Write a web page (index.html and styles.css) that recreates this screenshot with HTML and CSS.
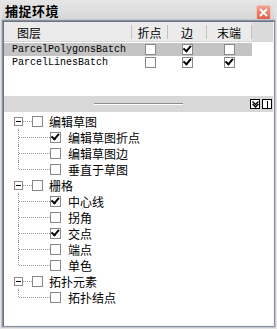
FILE: index.html
```html
<!DOCTYPE html>
<html lang="zh-CN">
<head>
  <meta charset="UTF-8">
  <title>捕捉环境</title>
  <link rel="stylesheet" href="styles.css">
</head>
<body>
  <div class="window">
    <div class="titlebar">
      <span class="title">捕捉环境</span>
      <span class="close">
        <svg width="9" height="9" viewBox="0 0 9 9"><path d="M1 1L8 8M8 1L1 8" stroke="#fff" stroke-width="2"/></svg>
      </span>
    </div>

    <div class="pane">
      <div class="grid">
        <div class="row head">
          <div class="cell name">图层</div>
          <div class="cell">折点</div>
          <div class="cell">边</div>
          <div class="cell">末端</div>
          <div class="cell filler"></div>
        </div>
        <div class="row sel">
          <div class="cell name mono">ParcelPolygonsBatch</div>
          <div class="cell"><span class="cb"></span></div>
          <div class="cell"><span class="cb on"></span></div>
          <div class="cell"><span class="cb"></span></div>
          <div class="cell blank"></div>
        </div>
        <div class="row">
          <div class="cell name mono">ParcelLinesBatch</div>
          <div class="cell"><span class="cb"></span></div>
          <div class="cell"><span class="cb on"></span></div>
          <div class="cell"><span class="cb on"></span></div>
          <div class="cell blank"></div>
        </div>
      </div>

      <div class="splitter">
        <span class="grip"></span>
        <span class="tools">
          <span class="tbtn">
            <svg width="7" height="7" viewBox="0 0 7 7"><path d="M0.5 0.5L3.5 3.5L6.5 0.5M0.5 3L3.5 6L6.5 3" fill="none" stroke="#000" stroke-width="1.3"/></svg>
          </span>
          <span class="tbtn"><span class="bar"></span></span>
        </span>
      </div>

      <ul class="tree">
        <li class="group">
          <div class="node"><span class="exp"></span><span class="dots"></span><span class="cb"></span><span class="lbl">编辑草图</span></div>
          <ul>
            <li class="node leaf"><span class="dots"></span><span class="cb on"></span><span class="lbl">编辑草图折点</span></li>
            <li class="node leaf"><span class="dots"></span><span class="cb"></span><span class="lbl">编辑草图边</span></li>
            <li class="node leaf last"><span class="dots"></span><span class="cb"></span><span class="lbl">垂直于草图</span></li>
          </ul>
        </li>
        <li class="group">
          <div class="node"><span class="exp"></span><span class="dots"></span><span class="cb"></span><span class="lbl">栅格</span></div>
          <ul>
            <li class="node leaf"><span class="dots"></span><span class="cb on"></span><span class="lbl">中心线</span></li>
            <li class="node leaf"><span class="dots"></span><span class="cb"></span><span class="lbl">拐角</span></li>
            <li class="node leaf"><span class="dots"></span><span class="cb on"></span><span class="lbl">交点</span></li>
            <li class="node leaf"><span class="dots"></span><span class="cb"></span><span class="lbl">端点</span></li>
            <li class="node leaf last"><span class="dots"></span><span class="cb"></span><span class="lbl">单色</span></li>
          </ul>
        </li>
        <li class="group">
          <div class="node"><span class="exp"></span><span class="dots"></span><span class="cb"></span><span class="lbl">拓扑元素</span></div>
          <ul>
            <li class="node leaf last"><span class="dots"></span><span class="cb"></span><span class="lbl">拓扑结点</span></li>
          </ul>
        </li>
      </ul>
    </div>
  </div>
</body>
</html>
```

FILE: styles.css
```css
body {
  margin: 0;
  font-family: "Noto Sans CJK SC", sans-serif;
  font-size: 12px;
  color: #000;
  background: #fff;
}
.window {
  width: 277px;
  height: 329px;
  box-sizing: border-box;
  background: #e4e4e4;
  display: flex;
  flex-direction: column;
  padding: 0 2px 2px 2px;
}
.titlebar {
  height: 20px;
  flex: none;
  display: flex;
  align-items: center;
  justify-content: space-between;
  padding: 0 4px 0 3px;
  background: linear-gradient(#e6e6e6, #d6d6d6);
}
.title {
  font-weight: bold;
  font-size: 13px;
  letter-spacing: 0.5px;
}
.close {
  width: 13px;
  height: 13px;
  margin-top: 4px;
  border-radius: 2px;
  background: linear-gradient(#f2a08e, #e0604a);
  border: 1px solid #f4c4b8;
  display: flex;
  align-items: center;
  justify-content: center;
}
.pane {
  flex: 1;
  display: flex;
  flex-direction: column;
  background: #fff;
  border: 1px solid #8a909c;
  outline: 1px solid #c4c8d0;
  box-shadow: inset 1px 1px 0 #6c7484, inset -1px -1px 0 #f4f4f4;
  padding: 1px;
}
.grid {
  height: 74px;
  flex: none;
}
.row {
  display: grid;
  grid-template-columns: 128px 36px 39px 45px 1fr;
  height: 13px;
}
.row.head {
  height: 19px;
  background: #ebebeb;
  border-bottom: 1px solid #d6d6d6;
  margin-bottom: 1px;
}
.head .cell {
  border-right: 1px solid #c2c2c2;
  margin: 3px 0 2px 0;
  justify-content: center;
}
.head .cell.name {
  padding-left: 13px;
  justify-content: flex-start;
}
.head .cell.filler {
  border-right: none;
  background: #dadada;
  margin: 0;
}
.cell {
  display: flex;
  align-items: center;
  justify-content: center;
  overflow: hidden;
}
.cell.name {
  justify-content: flex-start;
  padding-left: 8px;
}
.row.sel .cell {
  background: #c4c4c4;
}
.row.sel .cell.blank {
  background: #fff;
}
.mono {
  font-family: "Liberation Mono", monospace;
  font-size: 10px;
}
.cb {
  width: 9px;
  height: 9px;
  border: 1px solid #888;
  background: #fff;
  display: inline-block;
  flex: none;
  position: relative;
}
.cb.on::after {
  content: "";
  position: absolute;
  left: 1px;
  top: 1px;
  width: 6px;
  height: 3px;
  border-left: 2px solid #000;
  border-bottom: 2px solid #000;
  transform: rotate(-50deg);
  transform-origin: 3px 3px;
}
.splitter {
  height: 16px;
  flex: none;
  background: #d8d8d8;
  display: flex;
  align-items: center;
  padding-left: 90px;
  padding-right: 1px;
}
.grip {
  width: 89px;
  height: 1px;
  background: #8e8e8e;
  border-bottom: 1px solid #fff;
}
.tools {
  margin-left: auto;
  display: flex;
  gap: 2px;
}
.tbtn {
  width: 8px;
  height: 8px;
  border: 1px solid #000;
  background: #fff;
  display: flex;
  align-items: center;
  justify-content: center;
}
.bar {
  width: 1px;
  height: 7px;
  background: #000;
}
.tree,
.tree ul {
  list-style: none;
  margin: 0;
  padding: 0;
}
.tree {
  padding-top: 1px;
}
.node {
  height: 16px;
  display: flex;
  align-items: center;
  position: relative;
}
.group > .node {
  padding-left: 10px;
}
.exp {
  width: 7px;
  height: 7px;
  border: 1px solid #8a8a8a;
  background: #fff;
  position: relative;
  flex: none;
}
.exp::after {
  content: "";
  position: absolute;
  left: 1px;
  top: 3px;
  width: 5px;
  height: 1px;
  background: #000;
}
.dots {
  border-top: 1px dotted #9a9a9a;
  flex: none;
}
.group > .node .dots {
  width: 9px;
}
.lbl {
  margin-left: 6px;
  white-space: nowrap;
}
.leaf {
  padding-left: 15px;
}
.leaf::before {
  content: "";
  position: absolute;
  left: 14px;
  top: 0;
  height: 16px;
  border-left: 1px dotted #9a9a9a;
}
.leaf.last::before {
  height: 8px;
}
.leaf .dots {
  width: 31px;
}
.leaf .lbl {
  margin-left: 7px;
}
```
